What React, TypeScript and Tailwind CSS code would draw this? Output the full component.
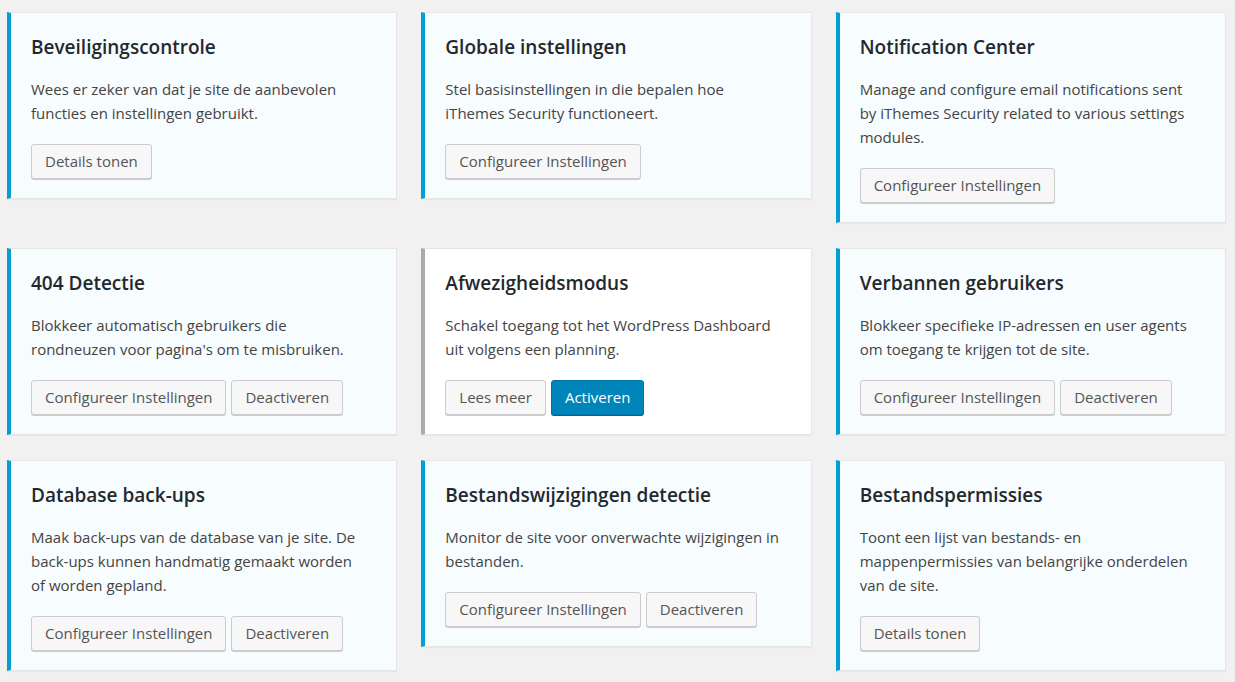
type Btn = { label: string; primary?: boolean }

type Module = {
  title: string
  lines: string[]
  buttons: Btn[]
  active?: boolean
}

const modules: Module[] = [
  {
    title: 'Beveiligingscontrole',
    lines: ['Wees er zeker van dat je site de aanbevolen', 'functies en instellingen gebruikt.'],
    buttons: [{ label: 'Details tonen' }],
    active: true,
  },
  {
    title: 'Globale instellingen',
    lines: ['Stel basisinstellingen in die bepalen hoe', 'iThemes Security functioneert.'],
    buttons: [{ label: 'Configureer Instellingen' }],
    active: true,
  },
  {
    title: 'Notification Center',
    lines: [
      'Manage and configure email notifications sent',
      'by iThemes Security related to various settings',
      'modules.',
    ],
    buttons: [{ label: 'Configureer Instellingen' }],
    active: true,
  },
  {
    title: '404 Detectie',
    lines: ['Blokkeer automatisch gebruikers die', "rondneuzen voor pagina's om te misbruiken."],
    buttons: [{ label: 'Configureer Instellingen' }, { label: 'Deactiveren' }],
    active: true,
  },
  {
    title: 'Afwezigheidsmodus',
    lines: ['Schakel toegang tot het WordPress Dashboard', 'uit volgens een planning.'],
    buttons: [{ label: 'Lees meer' }, { label: 'Activeren', primary: true }],
  },
  {
    title: 'Verbannen gebruikers',
    lines: ['Blokkeer specifieke IP-adressen en user agents', 'om toegang te krijgen tot de site.'],
    buttons: [{ label: 'Configureer Instellingen' }, { label: 'Deactiveren' }],
    active: true,
  },
  {
    title: 'Database back-ups',
    lines: [
      'Maak back-ups van de database van je site. De',
      'back-ups kunnen handmatig gemaakt worden',
      'of worden gepland.',
    ],
    buttons: [{ label: 'Configureer Instellingen' }, { label: 'Deactiveren' }],
    active: true,
  },
  {
    title: 'Bestandswijzigingen detectie',
    lines: ['Monitor de site voor onverwachte wijzigingen in', 'bestanden.'],
    buttons: [{ label: 'Configureer Instellingen' }, { label: 'Deactiveren' }],
    active: true,
  },
  {
    title: 'Bestandspermissies',
    lines: [
      'Toont een lijst van bestands- en',
      'mappenpermissies van belangrijke onderdelen',
      'van de site.',
    ],
    buttons: [{ label: 'Details tonen' }],
    active: true,
  },
]

function Button({ label, primary }: Btn) {
  return (
    <button
      className={
        primary
          ? 'h-[35px] px-[13px] rounded-[3px] border border-[#0073aa] bg-[#0085ba] text-white text-[15px] shadow-[0_1px_0_#006799] whitespace-nowrap'
          : 'h-[35px] px-[13px] rounded-[3px] border border-[#cccccc] bg-[#f7f7f7] text-[#555555] text-[15px] shadow-[0_1px_0_#cccccc] whitespace-nowrap'
      }
    >
      {label}
    </button>
  )
}

function ModuleCard({ title, lines, buttons, active }: Module) {
  return (
    <div
      className={
        active
          ? 'border border-[#e5e5e5] border-l-4 border-l-[#00a0d2] bg-[#f7fcfe] pt-[22px] pb-[19px] pl-5 pr-5 shadow-[0_1px_1px_rgba(0,0,0,0.04)]'
          : 'border border-[#e5e5e5] border-l-4 border-l-[#aaaaaa] bg-white pt-[22px] pb-[19px] pl-5 pr-5 shadow-[0_1px_1px_rgba(0,0,0,0.04)]'
      }
    >
      <h2 className="text-[19px] leading-6 font-semibold text-[#23282d]">{title}</h2>
      <div className="mt-[18px] text-[15px] leading-6 text-[#444444]">
        {lines.map((l) => (
          <div key={l} className="whitespace-nowrap">
            {l}
          </div>
        ))}
      </div>
      <div className="mt-[19px] flex gap-[5px]">
        {buttons.map((b) => (
          <Button key={b.label} {...b} />
        ))}
      </div>
    </div>
  )
}

export default function App() {
  return (
    <div
      className="min-h-screen bg-[#f1f1f1] pt-3 pl-[7px] pr-[9px]"
      style={{ fontFamily: '"Open Sans", "Noto Sans", sans-serif' }}
    >
      <div className="grid grid-cols-3 items-start gap-x-6 gap-y-[25px]">
        {modules.map((m) => (
          <ModuleCard key={m.title} {...m} />
        ))}
      </div>
    </div>
  )
}
